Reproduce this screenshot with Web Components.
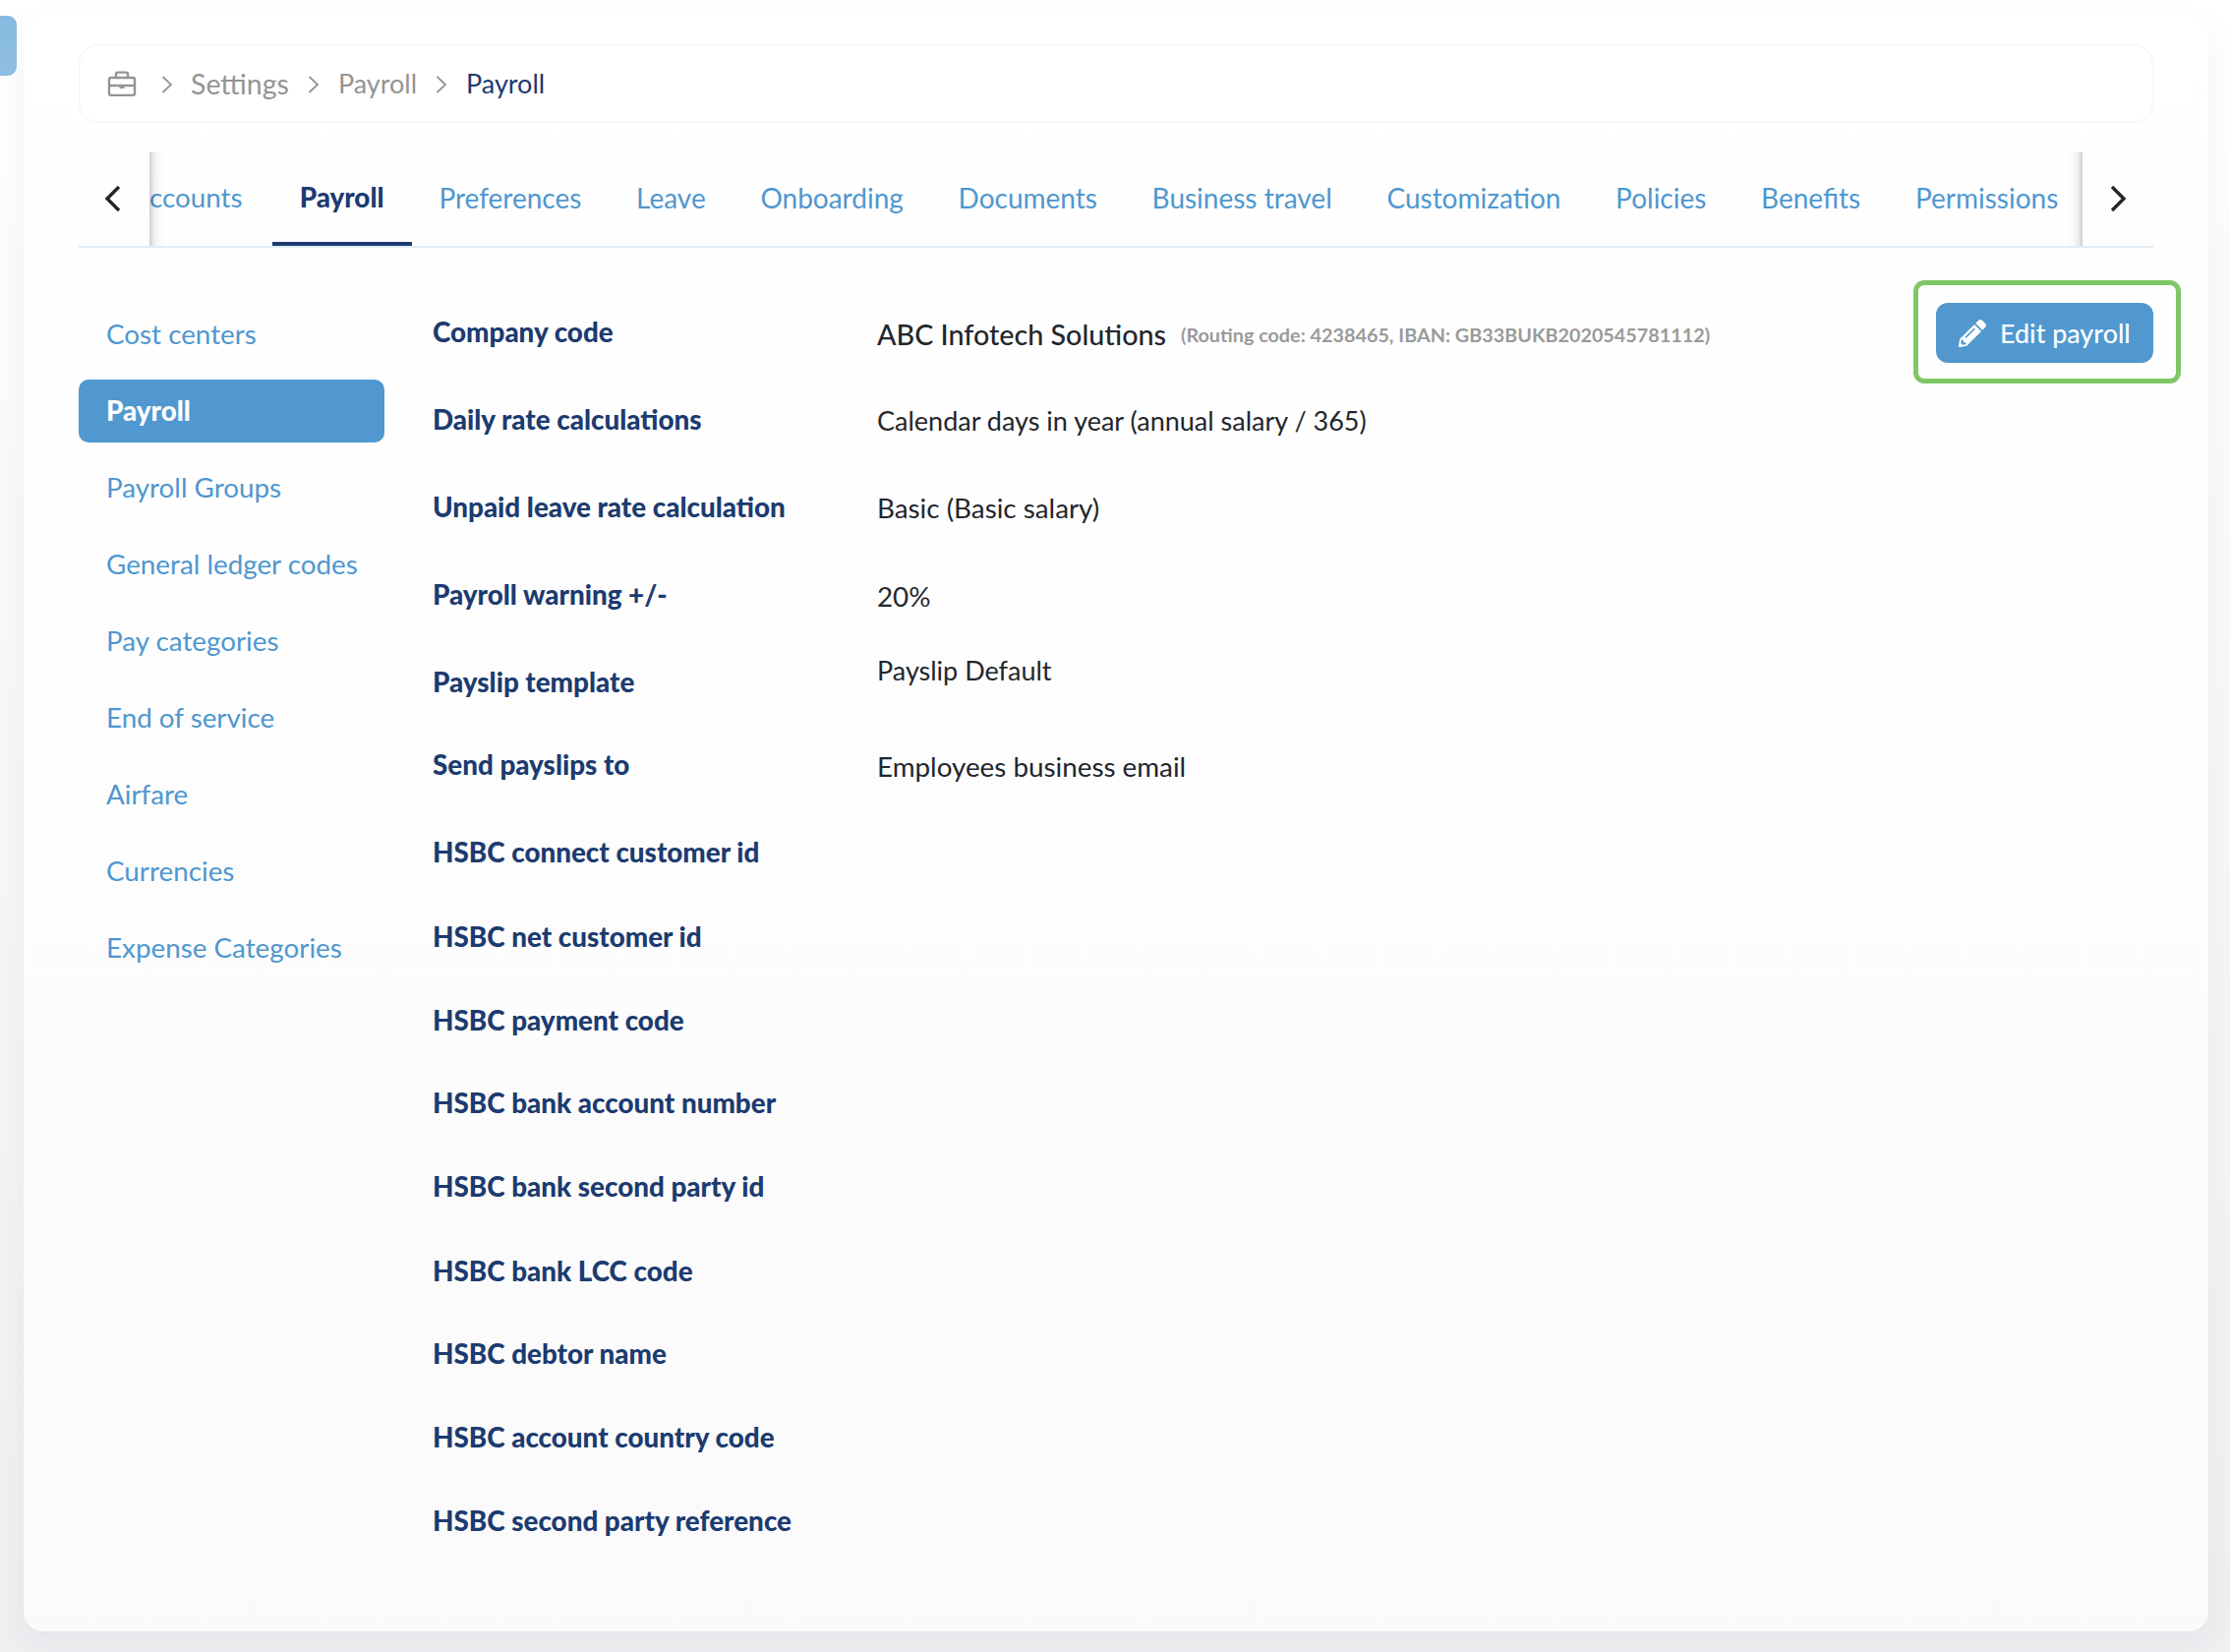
<!DOCTYPE html>
<html lang="en"><head><meta charset="utf-8"><title>Payroll settings</title>
<style>
html,body{margin:0;padding:0;}
body{width:2268px;height:1680px;overflow:hidden;background:linear-gradient(180deg,#fff 0,#f8f9fa 35%,#eeeff1 100%);font-family:"Lato","Liberation Sans",sans-serif;font-size:27.8px;}
</style></head><body>
<hr-page>
  <hr-breadcrumb slot="crumb"></hr-breadcrumb>
  <hr-tabs slot="tabs"></hr-tabs>
  <hr-sidebar slot="side"></hr-sidebar>
  <hr-fields slot="fields">
    <hr-field label="Company code" h="89" vo="14"><hr-company></hr-company></hr-field>
    <hr-field label="Daily rate calculations" h="89" vo="13" fs="27">Calendar days in year (annual salary / 365)</hr-field>
    <hr-field label="Unpaid leave rate calculation" h="89" vo="13">Basic (Basic salary)</hr-field>
    <hr-field label="Payroll warning +/-" h="89" vo="14">20%</hr-field>
    <hr-field label="Payslip template" h="84" vo="0" fs="27">Payslip Default</hr-field>
    <hr-field label="Send payslips to" h="89" vo="14">Employees business email</hr-field>
    <hr-field label="HSBC connect customer id" h="86"></hr-field>
    <hr-field label="HSBC net customer id" h="85"></hr-field>
    <hr-field label="HSBC payment code" h="84"></hr-field>
    <hr-field label="HSBC bank account number" h="85"></hr-field>
    <hr-field label="HSBC bank second party id" h="86"></hr-field>
    <hr-field label="HSBC bank LCC code" h="84"></hr-field>
    <hr-field label="HSBC debtor name" h="85"></hr-field>
    <hr-field label="HSBC account country code" h="85"></hr-field>
    <hr-field label="HSBC second party reference" h="85"></hr-field>
  </hr-fields>
  <hr-action slot="action">Edit payroll</hr-action>
</hr-page>
<script>
function def(name, html, init){
  customElements.define(name, class extends HTMLElement{
    constructor(){super();this.attachShadow({mode:'open'}).innerHTML=typeof html==='function'?html(this):html;}
    connectedCallback(){if(init)init(this);}
  });
}
const chev=(c)=>`<svg width="12" height="20" viewBox="0 0 12 20" fill="none" stroke="${c}" stroke-width="1.8"><path d="M1.5 2l8.500 8-8.500 8"/></svg>`;
def('hr-page',`<style>
:host{display:block;position:relative;height:1680px;box-sizing:border-box;padding:16px 22px 21px 24px}
.tab{position:absolute;left:0;top:16px;width:17px;height:61px;border-radius:0 9px 9px 0;background:linear-gradient(180deg,#86bae0,#8fbee0)}
.card{height:100%;box-sizing:border-box;padding:29px 56px 0 56px;border-radius:20px;background:linear-gradient(180deg,#fff 0,#fefefe 30%,#fafafa 100%);box-shadow:0 10px 30px rgba(40,50,70,.06)}
.t{margin-top:30px}
.body{display:flex;align-items:flex-start;padding-top:56px}
::slotted([slot=side]){flex:none;width:311px;margin-right:49px}
::slotted([slot=fields]){flex:1;min-width:0}
</style><div class="tab"></div><div class="card"><slot name="crumb"></slot><div class="t"><slot name="tabs"></slot></div><div class="body"><slot name="side"></slot><slot name="fields"></slot><slot name="action"></slot></div></div>`);

def('hr-breadcrumb',`<style>
:host{display:flex;align-items:center;height:80px;box-sizing:border-box;padding:0 0 1px 28px;border:1.5px solid #f2f3f4;border-radius:20px;background:#fff;color:#949494;font-size:27px}
svg{flex:none}
.c{display:flex;margin:2px 18px 0 25px}
.c2{margin-left:19px;margin-right:19px}
.s{font-size:28.500px}
.cur{color:#1c3b70}
</style>
<svg width="30" height="26" viewBox="0 0 30 26" fill="none" stroke="#949494" stroke-width="2.4"><rect x="2" y="7" width="26" height="18" rx="2"/><path d="M9 7V3.200A1.600 1.600 0 0 1 10.600 1.600h8.800A1.600 1.600 0 0 1 21 3.200V7M2 15h26"/><rect x="12.500" y="15" width="5" height="3" fill="#949494" stroke="none"/></svg>
<span class="c">${chev('#949494')}</span><span class="s">Settings</span>
<span class="c c2">${chev('#949494')}</span><span>Payroll</span>
<span class="c c2">${chev('#949494')}</span><span class="cur">Payroll</span>`);

def('hr-tabs',`<style>
:host{display:flex;height:97px;box-sizing:border-box;border-bottom:2px solid #e1ecf6;font-size:28px;color:#4f97cf}
.arrow{flex:none;width:72px;display:flex;align-items:center;justify-content:center;padding-bottom:2px;box-sizing:border-box}
.arrow.l{padding-right:3px}
.view{flex:1;min-width:0;position:relative;overflow:hidden;display:flex}
.view::before,.view::after{content:"";position:absolute;top:0;bottom:0;width:16px;pointer-events:none}
.view::before{left:0;background:linear-gradient(90deg,rgba(0,0,0,.2),rgba(0,0,0,.07) 25%,rgba(0,0,0,.02) 60%,rgba(0,0,0,0))}
.view::after{right:0;background:linear-gradient(270deg,rgba(0,0,0,.2),rgba(0,0,0,.07) 25%,rgba(0,0,0,.02) 60%,rgba(0,0,0,0))}
.t{flex:none;height:95px;box-sizing:border-box;padding:0 27.850px 4px;display:flex;align-items:center;white-space:nowrap}
.t.first{padding-left:0;padding-right:30px;font-size:27.800px}
.t.on{padding:0 28px 4px;color:#1c3b70;font-weight:900;font-size:27.800px;box-shadow:inset 0 -4px 0 #1c3b70}
</style>
<div class="arrow l"><svg width="18" height="28" viewBox="0 0 18 28" fill="none" stroke="#232529" stroke-width="3.4"><path d="M15 2L3 14l12 12"/></svg></div>
<div class="view">
<div class="t first">ccounts</div><div class="t on">Payroll</div><div class="t">Preferences</div><div class="t">Leave</div><div class="t">Onboarding</div><div class="t">Documents</div><div class="t">Business travel</div><div class="t">Customization</div><div class="t">Policies</div><div class="t">Benefits</div><div class="t">Permissions</div>
</div>
<div class="arrow"><svg width="18" height="28" viewBox="0 0 18 28" fill="none" stroke="#232529" stroke-width="3.4"><path d="M3 2l12 12L3 26"/></svg></div>`);

def('hr-sidebar',`<style>
:host{display:flex;flex-direction:column;gap:14px;font-size:27.8px;color:#4f97cf}
div{height:64px;box-sizing:border-box;padding:0 0 2px 28px;display:flex;align-items:center;border-radius:10px}
.on{background:#5098cf;color:#fff;font-weight:900}
</style>
<div>Cost centers</div><div class="on">Payroll</div><div>Payroll Groups</div><div>General ledger codes</div><div>Pay categories</div><div>End of service</div><div>Airfare</div><div>Currencies</div><div>Expense Categories</div>`);

def('hr-fields',`<style>:host{display:block}</style><slot></slot>`);

def('hr-field',(el)=>`<style>
:host{display:flex;align-items:flex-start;height:${el.getAttribute('h')}px;font-size:27.8px;line-height:36px;color:#23262b}
.l{flex:none;width:452px;margin-top:12px;color:#1c3b70;font-weight:900;white-space:nowrap}
.v{margin-top:${el.getAttribute('vo')||0}px;white-space:nowrap;font-size:${el.getAttribute('fs')||27.8}px}
</style><div class="l">${el.getAttribute('label')}</div><div class="v"><slot></slot></div>`);

def('hr-company',`<style>
:host{display:inline-flex;align-items:center;color:#23262b;font-size:28.700px;font-weight:500}
small{margin-left:15px;font-size:19.800px;font-weight:700;color:#9a9a9a}
</style>ABC Infotech Solutions<small>(Routing code: 4238465, IBAN: GB33BUKB2020545781112)</small>`);

def('hr-action',`<style>
:host{flex:none;position:relative;display:block}
:host::before{content:"";position:absolute;left:-23px;right:-28px;top:-23px;bottom:-21px;border:5px solid #7fc766;border-radius:11px}
.b{position:relative;width:221px;height:61px;box-sizing:border-box;padding-left:23px;display:flex;align-items:center;gap:14px;border-radius:12px;background:#5098cf;color:#fff;font-size:26.900px;font-weight:500}
svg{flex:none;width:28px;height:28px;fill:#fff}
</style><div class="b"><svg viewBox="0 0 512 512"><path d="M497.900 142.100l-46.100 46.100c-4.700 4.700-12.300 4.700-17 0l-111-111c-4.700-4.700-4.700-12.300 0-17l46.100-46.100c18.700-18.700 49.100-18.700 67.900 0l60.100 60.100c18.800 18.700 18.800 49.100 0 67.900zM284.200 99.800L21.600 362.400.4 483.900c-2.900 16.400 11.400 30.600 27.800 27.800l121.500-21.300 262.600-262.600c4.700-4.700 4.700-12.300 0-17l-111-111c-4.800-4.700-12.400-4.700-17.100 0zM124.100 339.900c-5.500-5.500-5.500-14.300 0-19.800l154-154c5.500-5.500 14.300-5.500 19.800 0s5.500 14.300 0 19.800l-154 154c-5.500 5.500-14.300 5.500-19.800 0zM88 424h48v36.300l-64.500 11.300-31.100-31.100L51.700 376H88v48z"/></svg><span><slot></slot></span></div>`);
</script>
</body></html>
